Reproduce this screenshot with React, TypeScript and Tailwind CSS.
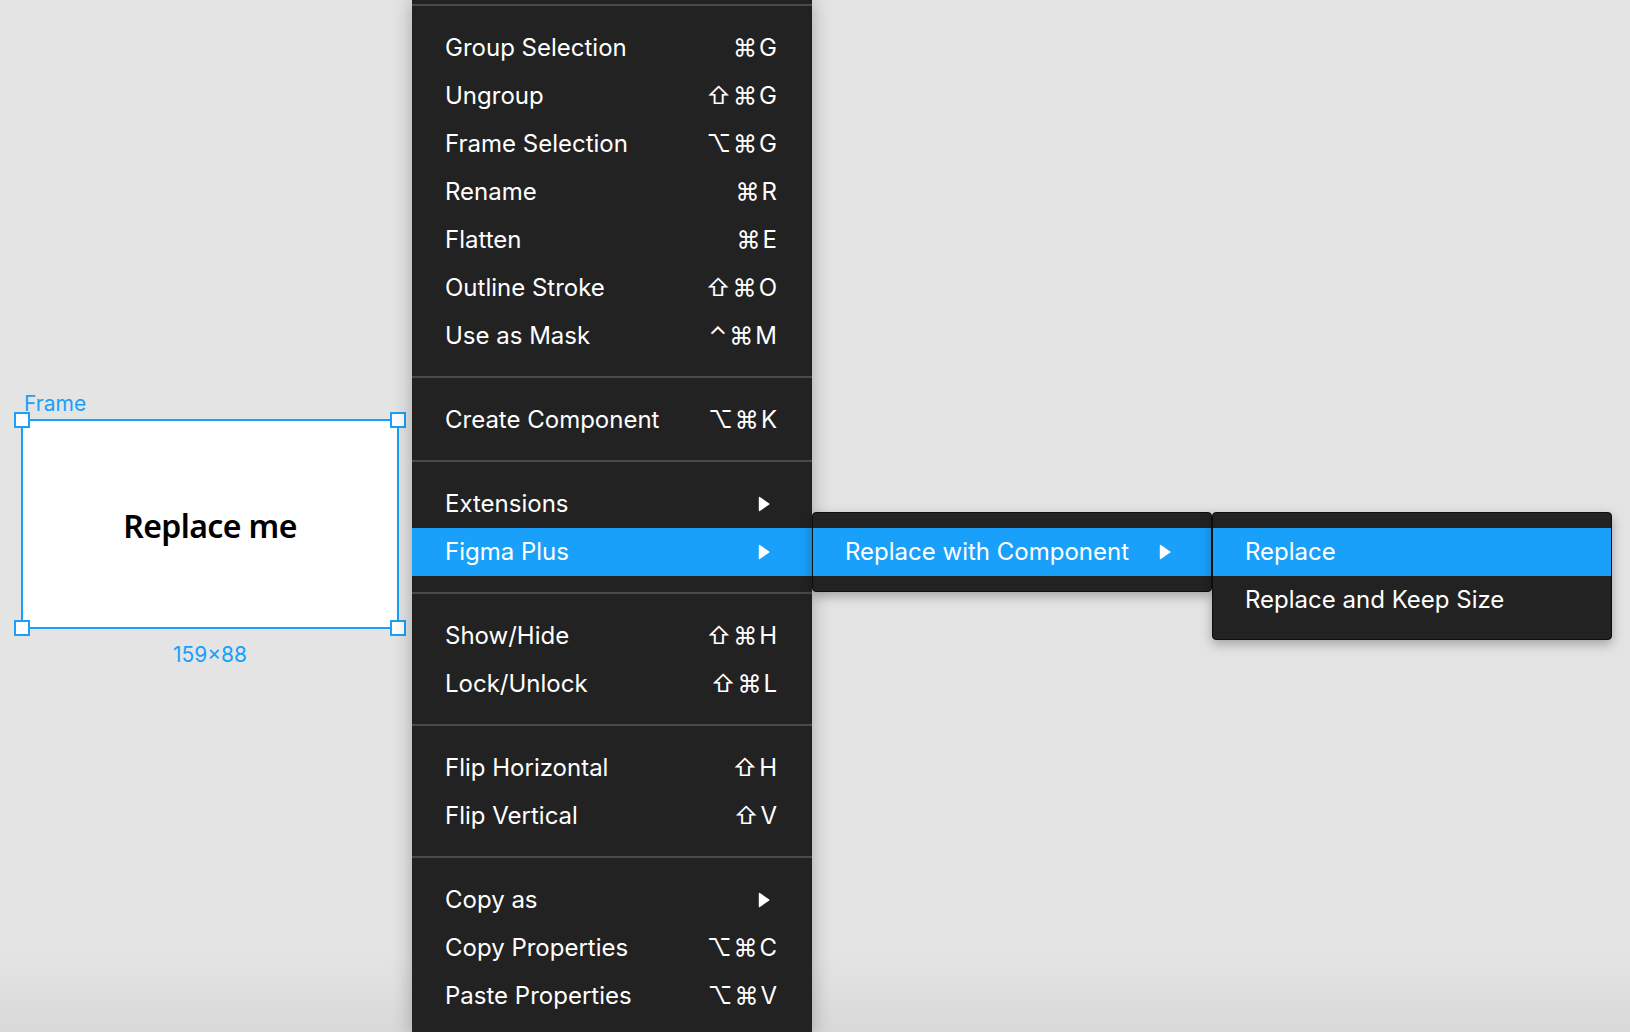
import React from "react";

type Item = {
  label: string;
  keys?: string[];
  submenu?: boolean;
  active?: boolean;
};

const groups: Item[][] = [
  [
    { label: "Group Selection", keys: ["⌘", "G"] },
    { label: "Ungroup", keys: ["⇧", "⌘", "G"] },
    { label: "Frame Selection", keys: ["⌥", "⌘", "G"] },
    { label: "Rename", keys: ["⌘", "R"] },
    { label: "Flatten", keys: ["⌘", "E"] },
    { label: "Outline Stroke", keys: ["⇧", "⌘", "O"] },
    { label: "Use as Mask", keys: ["⌃", "⌘", "M"] },
  ],
  [{ label: "Create Component", keys: ["⌥", "⌘", "K"] }],
  [
    { label: "Extensions", submenu: true },
    { label: "Figma Plus", submenu: true, active: true },
  ],
  [
    { label: "Show/Hide", keys: ["⇧", "⌘", "H"] },
    { label: "Lock/Unlock", keys: ["⇧", "⌘", "L"] },
  ],
  [
    { label: "Flip Horizontal", keys: ["⇧", "H"] },
    { label: "Flip Vertical", keys: ["⇧", "V"] },
  ],
  [
    { label: "Copy as", submenu: true },
    { label: "Copy Properties", keys: ["⌥", "⌘", "C"] },
    { label: "Paste Properties", keys: ["⌥", "⌘", "V"] },
  ],
];

const font = { fontFamily: "Inter, 'DejaVu Sans', sans-serif" };

function Arrow() {
  return (
    <svg width="12" height="16" viewBox="0 0 12 16" className="shrink-0">
      <path
        d="M1.5 1.5 L10.8 8 L1.5 14.5 Z"
        fill="white"
        stroke="white"
        strokeWidth="1.4"
        strokeLinejoin="round"
      />
    </svg>
  );
}

function Keys({ keys }: { keys: string[] }) {
  return (
    <div className="flex items-center gap-[2px] text-[24px] leading-none">
      {keys.map((k, i) => (
        <span key={i}>{k}</span>
      ))}
    </div>
  );
}

function SubMenus() {
  return (
    <div className="absolute left-full top-[-16px] z-20 w-[400px] rounded-[4px] border border-[#0e0e0e] bg-[#222222] py-[15px] shadow-[0_4px_12px_rgba(0,0,0,0.3)]">
      <div className="relative flex h-[48px] items-center justify-between bg-[#18a0fb] pl-[32px] pr-[40px] text-[24px] text-white">
        <span>Replace with Component</span>
        <Arrow />
      </div>
      <div className="absolute left-[399px] top-[-1px] z-30 w-[400px] rounded-[4px] border border-[#0e0e0e] bg-[#222222] py-[15px] shadow-[0_4px_12px_rgba(0,0,0,0.3)]">
        <div className="flex h-[48px] items-center bg-[#18a0fb] pl-[32px] text-[24px] text-white">
          Replace
        </div>
        <div className="flex h-[48px] items-center pl-[32px] text-[24px] text-white">
          Replace and Keep Size
        </div>
      </div>
    </div>
  );
}

function MenuRow({ item }: { item: Item }) {
  return (
    <div
      className={
        "relative flex h-[48px] items-center justify-between pl-[33px] text-[24px] text-white " +
        (item.submenu ? "pr-[42px] " : "pr-[35px] ") +
        (item.active ? "bg-[#18a0fb]" : "")
      }
    >
      <span>{item.label}</span>
      {item.submenu ? <Arrow /> : item.keys ? <Keys keys={item.keys} /> : null}
      {item.active ? <SubMenus /> : null}
    </div>
  );
}

function Handle({ pos }: { pos: string }) {
  return (
    <div
      className={
        "absolute h-[16px] w-[16px] border-2 border-[#18a0fb] bg-white " + pos
      }
    />
  );
}

export default function App() {
  return (
    <div
      className="relative h-screen w-screen overflow-hidden bg-[#e4e4e4]"
      style={font}
    >
      <div className="pointer-events-none absolute bottom-0 left-0 right-0 h-[80px] bg-gradient-to-b from-transparent to-[rgba(0,0,0,0.05)]" />

      {/* Frame on canvas */}
      <div className="absolute left-[21px] top-[419px] h-[210px] w-[378px]">
        <div className="flex h-full w-full items-center justify-center border-2 border-[#18a0fb] bg-white pt-[3px]">
          <span
            className="text-[32px] font-semibold leading-none tracking-[-0.6px] text-black"
            style={{ fontFamily: "'Noto Sans', sans-serif" }}
          >
            Replace me
          </span>
        </div>
        <div className="absolute left-[3px] top-[-26px] text-[21px] leading-[21px] text-[#18a0fb]">
          Frame
        </div>
        <div className="absolute left-0 right-0 top-[225px] text-center text-[21px] leading-[21px] text-[#18a0fb]">
          159×88
        </div>
        <Handle pos="left-[-7px] top-[-7px]" />
        <Handle pos="right-[-7px] top-[-7px]" />
        <Handle pos="bottom-[-7px] left-[-7px]" />
        <Handle pos="bottom-[-7px] right-[-7px]" />
      </div>

      {/* Context menu */}
      <div className="absolute left-[412px] top-0 z-10 flex w-[400px] flex-col bg-[#222222] pt-[4px] shadow-[0_0_18px_rgba(0,0,0,0.28)]">
        {groups.map((g, gi) => (
          <div key={gi} className="flex flex-col">
            <div className="h-[2px] bg-[#4a4a4a]" />
            <div className="flex flex-col pb-[16px] pt-[18px]">
              {g.map((item) => (
                <MenuRow key={item.label} item={item} />
              ))}
            </div>
          </div>
        ))}
      </div>
    </div>
  );
}
